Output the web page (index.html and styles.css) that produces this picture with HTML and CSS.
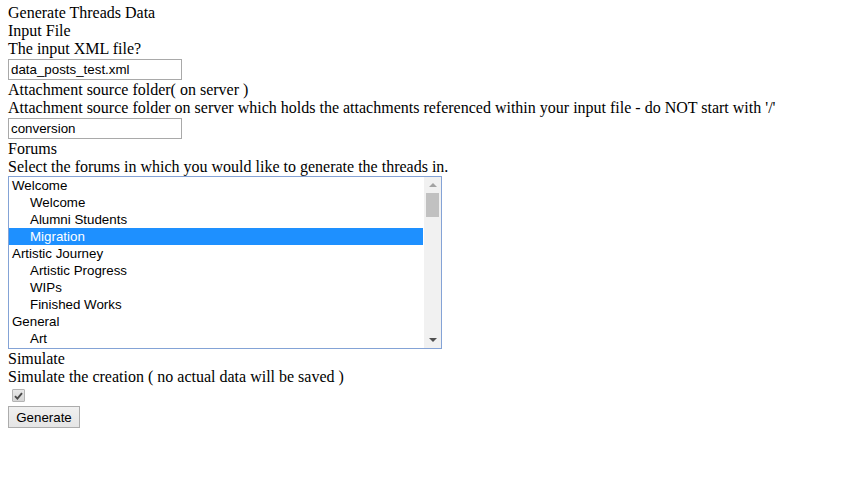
FILE: index.html
```html
<!DOCTYPE html>
<html>
<head>
<meta charset="utf-8">
<title>Generate Threads Data</title>
<link rel="stylesheet" href="styles.css">
</head>
<body>
<form class="form">
  <div class="line">Generate Threads Data</div>
  <div class="line">Input File</div>
  <div class="line">The input XML file?</div>
  <div class="field-row"><input class="text-input" type="text" value="data_posts_test.xml"></div>
  <div class="line">Attachment source folder( on server )</div>
  <div class="line">Attachment source folder on server which holds the attachments referenced within your input file - do NOT start with '/'</div>
  <div class="field-row"><input class="text-input" type="text" value="conversion"></div>
  <div class="line">Forums</div>
  <div class="line">Select the forums in which you would like to generate the threads in.</div>
  <div class="select-row">
    <div class="listbox">
      <div class="options">
        <div class="opt">Welcome</div>
        <div class="opt child">Welcome</div>
        <div class="opt child">Alumni Students</div>
        <div class="opt child selected">Migration</div>
        <div class="opt">Artistic Journey</div>
        <div class="opt child">Artistic Progress</div>
        <div class="opt child">WIPs</div>
        <div class="opt child">Finished Works</div>
        <div class="opt">General</div>
        <div class="opt child">Art</div>
      </div>
      <div class="scrollbar">
        <div class="arrow up"></div>
        <div class="thumb"></div>
        <div class="track-fill"></div>
        <div class="arrow down"></div>
      </div>
    </div>
  </div>
  <div class="line">Simulate</div>
  <div class="line">Simulate the creation ( no actual data will be saved )</div>
  <div class="check-row">
    <span class="checkbox">
      <svg width="9" height="8" viewBox="0 0 9 8"><path d="M1 4.2 L3.4 6.6 L8 1.2" fill="none" stroke="#4a4a4a" stroke-width="1.9"/></svg>
    </span>
  </div>
  <div class="button-row"><button class="btn" type="button">Generate</button></div>
</form>
</body>
</html>
```

FILE: styles.css
```css
html, body {
  background: #ffffff;
}
body {
  margin: 4px 8px 8px 8px;
  font-family: "Liberation Serif", "Times New Roman", serif;
  font-size: 16px;
  color: #000;
}
.form {
  display: flex;
  flex-direction: column;
}
.line {
  height: 18px;
  line-height: 18px;
  white-space: nowrap;
}
.field-row {
  height: 23px;
  padding-top: 1px;
  box-sizing: border-box;
}
.text-input {
  display: block;
  box-sizing: border-box;
  width: 174px;
  height: 21px;
  margin: 0;
  padding: 1px 2px;
  border: 1px solid #a9a9a9;
  font-family: "Liberation Sans", Arial, sans-serif;
  font-size: 13.33px;
  color: #000;
  background: #fff;
  outline: none;
}
.select-row {
  height: 174px;
}
.listbox {
  box-sizing: border-box;
  width: 434px;
  height: 173px;
  border: 1px solid #84a3d6;
  display: flex;
  background: #fff;
}
.options {
  flex: 1;
  margin-right: 1px;
  font-family: "Liberation Sans", Arial, sans-serif;
  font-size: 13.33px;
  overflow: hidden;
}
.opt {
  height: 17px;
  line-height: 17px;
  padding-left: 3px;
  white-space: nowrap;
  color: #000;
}
.opt.child {
  padding-left: 21px;
}
.opt.selected {
  background: #1e90ff;
  color: #fff;
}
.scrollbar {
  width: 17px;
  background: #f1f1f1;
  display: flex;
  flex-direction: column;
  align-items: center;
}
.arrow {
  width: 0;
  height: 0;
  border-left: 4px solid transparent;
  border-right: 4px solid transparent;
}
.arrow.up {
  margin-top: 6px;
  border-bottom: 4px solid #a3a3a3;
}
.arrow.down {
  margin-bottom: 6px;
  border-top: 4px solid #505050;
}
.thumb {
  margin-top: 6px;
  width: 13px;
  height: 24px;
  background: #c1c1c1;
}
.track-fill {
  flex: 1;
}
.check-row {
  height: 20px;
  padding-top: 3px;
  box-sizing: border-box;
}
.checkbox {
  display: flex;
  align-items: center;
  justify-content: center;
  box-sizing: border-box;
  width: 13px;
  height: 13px;
  margin-left: 4px;
  border: 1px solid #b4b4b4;
  border-radius: 1px;
  background: linear-gradient(#e8e8e8, #d6d6d6);
}
.button-row {
  padding-top: 0;
}
.btn {
  box-sizing: border-box;
  height: 22px;
  width: 72px;
  padding: 0 6px;
  margin: 0;
  border: 1px solid #acacac;
  border-radius: 0;
  background: linear-gradient(#f0f0f0, #e5e5e5);
  font-family: "Liberation Sans", Arial, sans-serif;
  font-size: 13.33px;
  color: #000;
}
```
